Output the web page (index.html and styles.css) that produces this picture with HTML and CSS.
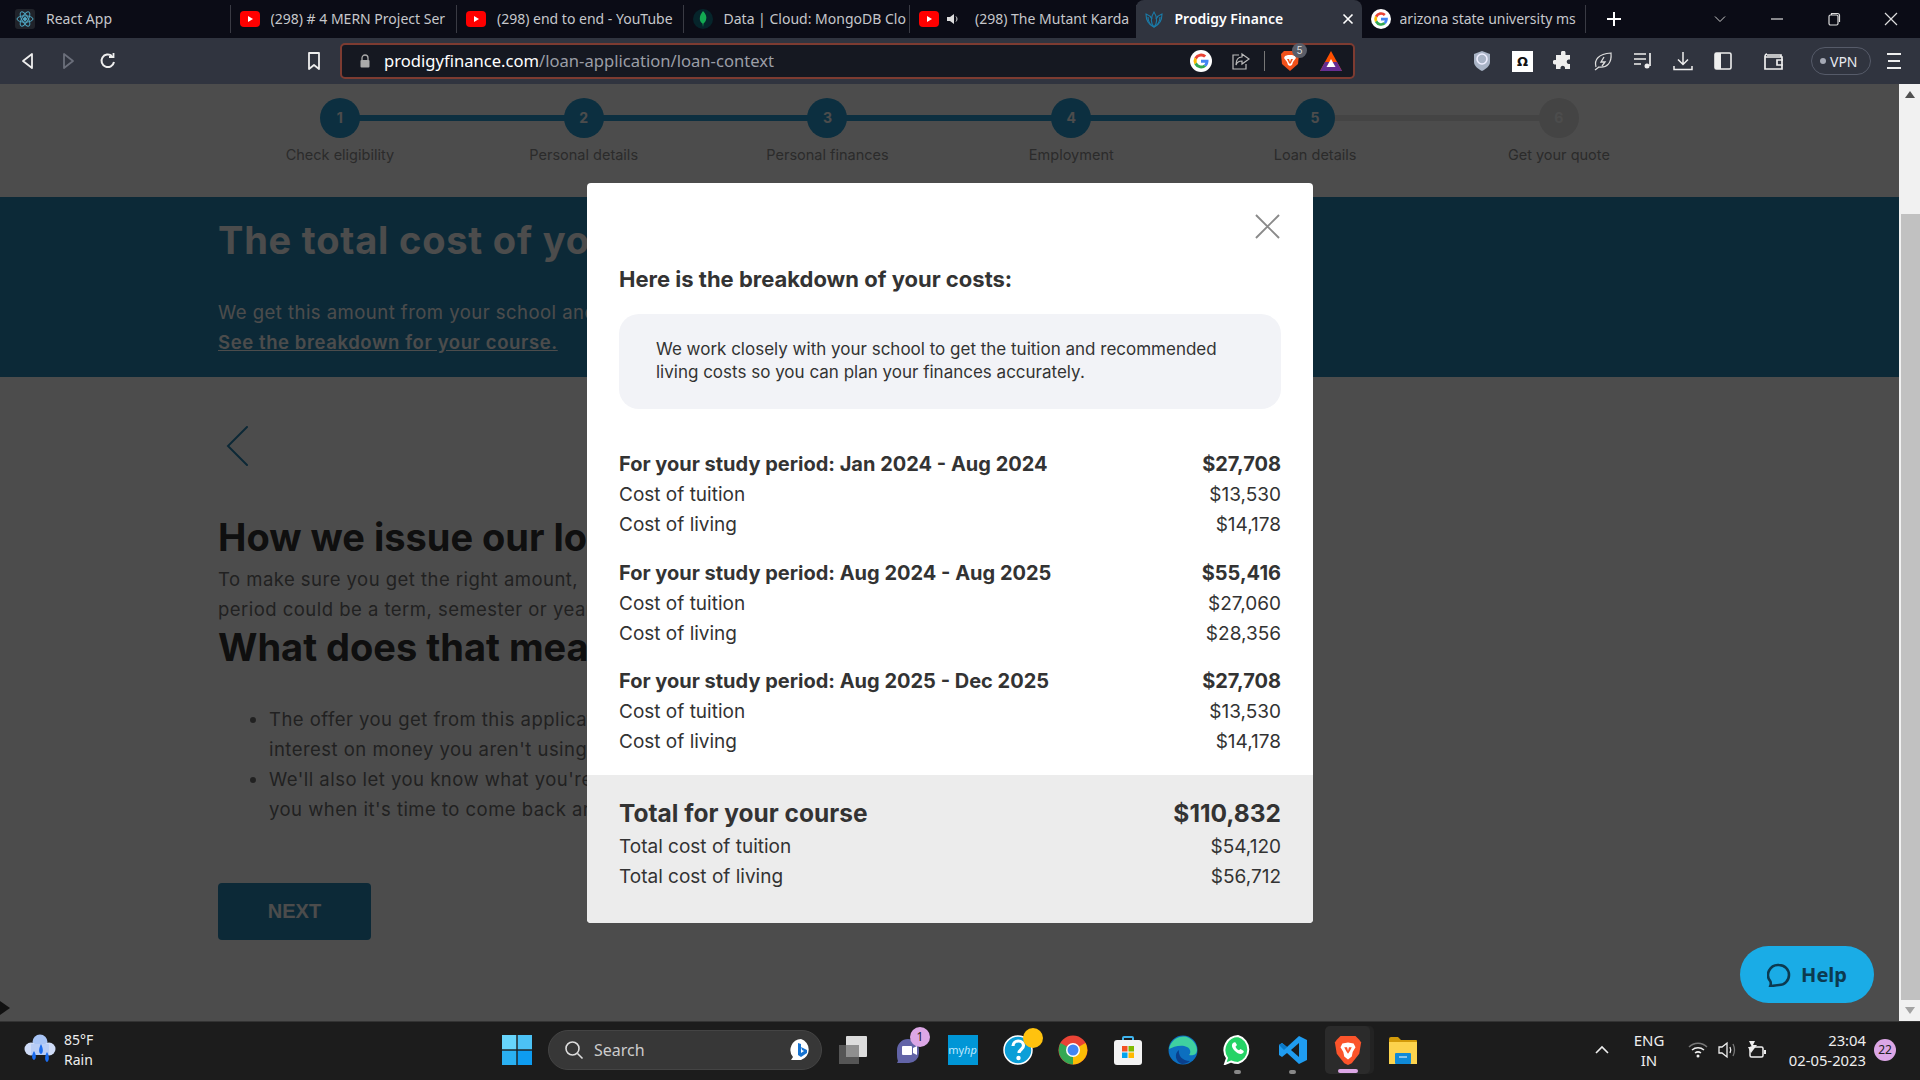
FILE: index.html
```html
<!DOCTYPE html>
<html lang="en">
  <head>
    <meta charset="UTF-8" />
    <meta name="viewport" content="width=device-width, initial-scale=1.0" />
    <title>Prodigy Finance</title>
    <link rel="stylesheet" href="styles.css">
  </head>
  <body>
    <svg class="defs" width="0" height="0">
      <symbol id="yt" viewBox="0 0 20 20"><rect x="0" y="2" width="20" height="16" rx="4" fill="#f00"/><path d="M8 7l5 3-5 3z" fill="#fff"/></symbol>
      <symbol id="google" viewBox="0 0 24 24">
        <circle cx="12" cy="12" r="12" fill="#fff"/>
        <path d="M12 7a5 5 0 0 1 3.4 1.3l2.3-2.3A8.4 8.4 0 0 0 4.8 8.2l2.7 2.1A5 5 0 0 1 12 7z" fill="#ea4335"/>
        <path d="M7.500 10.300l-2.700-2.100a8.400 8.400 0 0 0 0 7.600l2.700-2.100a5 5 0 0 1 0-3.400z" fill="#fbbc05"/>
        <path d="M4.800 15.800A8.400 8.400 0 0 0 17.700 18l-2.600-2a5 5 0 0 1-7.600-2.300z" fill="#34a853"/>
        <path d="M20.200 10.500H12v3.300h4.700a4 4 0 0 1-1.600 2.200l2.600 2c1.700-1.500 2.700-4.400 2.500-7.500z" fill="#4285f4"/>
      </symbol>
    </svg>

    <div class="tabbar">
      <div class="tab tab-first">
        <svg class="fav" viewBox="0 0 20 20" fill="none" stroke="#4fa8c4" stroke-width="1"><rect width="20" height="20" rx="3" fill="#20232a" stroke="none"/><ellipse cx="10" cy="10" rx="8" ry="3.200"/><ellipse cx="10" cy="10" rx="8" ry="3.200" transform="rotate(60 10 10)"/><ellipse cx="10" cy="10" rx="8" ry="3.200" transform="rotate(120 10 10)"/><circle cx="10" cy="10" r="1.500" fill="#4fa8c4"/></svg>
        <span class="tab-title">React App</span>
      </div>
      <div class="tab"><svg class="fav"><use href="#yt"/></svg><span class="tab-title">(298) # 4 MERN Project Ser</span></div>
      <div class="tab"><svg class="fav"><use href="#yt"/></svg><span class="tab-title">(298) end to end - YouTube</span></div>
      <div class="tab">
        <svg class="fav" viewBox="0 0 20 20"><circle cx="10" cy="10" r="10" fill="#06252b"/><path d="M10 2c3 3 4 6 3 9-.5 2-2 3-2.500 3.500L10 18l-.5-3.500C8 13.500 7 12 6.800 10 6.700 7 8 4.500 10 2z" fill="#13aa52"/></svg>
        <span class="tab-title">Data | Cloud: MongoDB Clo</span>
      </div>
      <div class="tab">
        <svg class="fav"><use href="#yt"/></svg>
        <svg class="tab-sound" viewBox="0 0 14 14"><path d="M1 5h3l4-3v10L4 9H1z" fill="#ddd"/><path d="M10 4.500c1.300 1.500 1.300 3.500 0 5" stroke="#ddd" fill="none"/></svg>
        <span class="tab-title">(298) The Mutant Karda</span>
      </div>
      <div class="tab tab-active">
        <svg class="fav" viewBox="0 0 20 20" fill="none" stroke="#1a7ba8" stroke-width="1.100"><path d="M10 18C5 16 2 12 2 5c3 1 5 3 6 5"/><path d="M10 18c5-2 8-6 8-13-3 1-5 3-6 5"/><path d="M10 18c-3-3-4-9 0-15 4 6 3 12 0 15z"/><path d="M10 18c-4-2-6-6-6-10M10 18c4-2 6-6 6-10"/></svg>
        <span class="tab-title">Prodigy Finance</span>
        <svg class="tab-close" viewBox="0 0 12 12" stroke="#fff" stroke-width="1.600"><path d="M1.500 1.500l9 9M10.500 1.500l-9 9"/></svg>
      </div>
      <div class="tab tab-last"><svg class="fav"><use href="#google"/></svg><span class="tab-title">arizona state university ms</span></div>
      <svg class="new-tab" viewBox="0 0 16 16" stroke="#fff" stroke-width="2"><path d="M8 1v14M1 8h14"/></svg>
      <div class="win-controls">
        <svg class="win-icon" viewBox="0 0 14 14" fill="none" stroke="#ccc"><path d="M2 4.500l5 5 5-5"/></svg>
        <svg class="win-icon" viewBox="0 0 14 14" stroke="#ddd" stroke-width="1.200"><path d="M1 7h12"/></svg>
        <svg class="win-icon" viewBox="0 0 14 14" fill="none" stroke="#ddd" stroke-width="1.200"><rect x="2" y="3" width="9" height="10" rx="1.500"/><path d="M4.500 3V1.500h6a2 2 0 0 1 2 2V10"/></svg>
        <svg class="win-icon" viewBox="0 0 14 14" stroke="#ddd" stroke-width="1.200"><path d="M1 1l12 12M13 1L1 13"/></svg>
      </div>
    </div>

    <div class="toolbar">
      <svg class="tool nav-first" viewBox="0 0 20 20" fill="none" stroke="#eee" stroke-width="1.800"><path d="M14 3v14L5 10z" stroke-linejoin="round"/></svg>
      <svg class="tool" viewBox="0 0 20 20" fill="none" stroke="#6b6f7b" stroke-width="1.800"><path d="M6 3v14l9-7z" stroke-linejoin="round"/></svg>
      <svg class="tool" viewBox="0 0 20 20" fill="none" stroke="#eee" stroke-width="2"><path d="M16 11a6.300 6.300 0 1 1-2-6"/><path d="M11 6h4.500V2" stroke-width="1.800"/></svg>
      <svg class="tool bookmark" viewBox="0 0 20 20" fill="none" stroke="#eee" stroke-width="1.800"><path d="M5 2h10v16l-5-4-5 4z" stroke-linejoin="round"/></svg>
      <div class="urlbar">
        <svg class="lock" viewBox="0 0 12 14"><path d="M3 6V4a3 3 0 0 1 6 0v2" fill="none" stroke="#aaa" stroke-width="1.300"/><rect x="1.500" y="6" width="9" height="7.500" rx="1" fill="#aaa"/></svg>
        <span class="url"><span class="url-host">prodigyfinance.com</span>/loan-application/loan-context</span>
        <svg class="url-g"><use href="#google"/></svg>
        <svg class="url-share" viewBox="0 0 20 20" fill="none" stroke="#bbb" stroke-width="1.200"><path d="M8 4H2v14h13v-5"/><path d="M11 3l7 5-7 5v-3c-3 0-5 1-6 4 0-5 2-8 6-8z"/></svg>
        <span class="url-sep"></span>
        <span class="shield">
          <svg class="url-brave" viewBox="0 0 20 22"><path d="M4 1h12l3 3-1 10-8 7-8-7L1 4z" fill="#f1511b"/><path d="M5 6l3-1h4l3 1 1 2-3 4-1 3-2 1-2-1-1-3-3-4z" fill="#fff"/><path d="M7 9h2l1 3 1-3h2l-2 4-1 1-1-1z" fill="#f1511b"/></svg>
          <span class="shield-badge">5</span>
        </span>
        <svg class="url-bat" viewBox="0 0 24 22"><path d="M12 1l11 20H1z" fill="#ff5000"/><path d="M1 21l5-9h12l5 9z" fill="#662d91"/><path d="M12 9l4.500 8h-9z" fill="#fff"/></svg>
      </div>
      <svg class="ext ext-first" viewBox="0 0 20 22"><path d="M10 1l8 3v8c0 4-4 7-8 9-4-2-8-5-8-9V4z" fill="#a9b4c6"/><circle cx="10" cy="9" r="5" fill="none" stroke="#eef" stroke-width="1.600"/></svg>
      <span class="omega">Ω</span>
      <svg class="ext" viewBox="0 0 20 20"><path d="M8 1.500a2.300 2.300 0 0 1 4.500 0V4H17v4.500h-1.500a2.300 2.300 0 0 0 0 4.500H17v5h-5v-1.500a2.300 2.300 0 0 0-4.500 0V18H3v-4.500H1.500a2.300 2.300 0 0 1 0-4.500H3V4h5z" fill="#eee"/></svg>
      <svg class="ext" viewBox="0 0 20 20" fill="none" stroke="#ddd" stroke-width="1.200"><path d="M3 16C1 9 5 3 18 2c1 10-4 15-12 14l-4 3"/><path d="M11 6l-3 5h4l-3 4" stroke-width="1.300"/></svg>
      <svg class="ext" viewBox="0 0 20 20" fill="none" stroke="#eee" stroke-width="1.700"><path d="M1 3h12M1 8h12M1 13h7"/><path d="M17 2v13"/><circle cx="14" cy="15" r="2.500" fill="#eee" stroke="none"/></svg>
      <svg class="ext" viewBox="0 0 20 20" fill="none" stroke="#eee" stroke-width="1.500"><path d="M10 1v12M5 8.500l5 5 5-5M1 15v3.500h18V15"/></svg>
      <svg class="ext" viewBox="0 0 20 20"><rect x="2" y="2" width="16" height="16" rx="1.500" fill="none" stroke="#eee" stroke-width="1.600"/><rect x="2" y="2" width="6" height="16" fill="#eee"/></svg>
      <svg class="ext ext-wallet" viewBox="0 0 22 20" fill="none" stroke="#eee" stroke-width="1.700"><path d="M4 4h14v2M2 6h17v12H2zM2 6c0-2 1-3 2-3"/><path d="M20 9h-6v5h6"/></svg>
      <span class="vpn"><span class="vpn-dot"></span>VPN</span>
      <svg class="ext ext-menu" viewBox="0 0 20 20" stroke="#eee" stroke-width="1.800"><path d="M3 3h14M4 10h12M3 17h14"/></svg>
    </div>

    <div class="viewport">
      <main class="page">
        <div class="stepper">
          <div class="step step-done"><span class="step-dot">1</span><span class="step-label">Check eligibility</span></div>
          <div class="step step-done"><span class="step-dot">2</span><span class="step-label">Personal details</span></div>
          <div class="step step-done"><span class="step-dot">3</span><span class="step-label">Personal finances</span></div>
          <div class="step step-done"><span class="step-dot">4</span><span class="step-label">Employment</span></div>
          <div class="step step-current"><span class="step-dot">5</span><span class="step-label">Loan details</span></div>
          <div class="step step-todo"><span class="step-dot">6</span><span class="step-label">Get your quote</span></div>
        </div>

        <section class="banner">
          <h1>The total cost of your</h1>
          <p>We get this amount from your school and</p>
          <a class="banner-link" href="#">See the breakdown for your course.</a>
        </section>

        <section class="content">
          <svg class="back" viewBox="0 0 22 40" fill="none" stroke="#2a86b5" stroke-width="2" stroke-linecap="round"><path d="M21 1L2 20l19 19"/></svg>
          <h2>How we issue our loan</h2>
          <p>To make sure you get the right amount,<br />period could be a term, semester or year</p>
          <h2>What does that mean</h2>
          <ul>
            <li>The offer you get from this application<br />interest on money you aren't using</li>
            <li>We'll also let you know what you're<br />you when it's time to come back and</li>
          </ul>
          <button class="next-btn">NEXT</button>
        </section>
      </main>

      <div class="overlay"></div>
      <span class="corner-arrow"></span>

      <div class="modal">
        <div class="modal-head">
          <svg class="modal-close" viewBox="0 0 26 26" stroke="#8a8a8a" stroke-width="2"><path d="M1 1l24 24M25 1L1 25"/></svg>
        </div>
        <div class="modal-body">
          <h3>Here is the breakdown of your costs:</h3>
          <p class="note">We work closely with your school to get the tuition and recommended living costs so you can plan your finances accurately.</p>
          <div class="group">
            <div class="row row-head"><span>For your study period: Jan 2024 - Aug 2024</span><span>$27,708</span></div>
            <div class="row"><span>Cost of tuition</span><span>$13,530</span></div>
            <div class="row"><span>Cost of living</span><span>$14,178</span></div>
          </div>
          <div class="group">
            <div class="row row-head"><span>For your study period: Aug 2024 - Aug 2025</span><span>$55,416</span></div>
            <div class="row"><span>Cost of tuition</span><span>$27,060</span></div>
            <div class="row"><span>Cost of living</span><span>$28,356</span></div>
          </div>
          <div class="group">
            <div class="row row-head"><span>For your study period: Aug 2025 - Dec 2025</span><span>$27,708</span></div>
            <div class="row"><span>Cost of tuition</span><span>$13,530</span></div>
            <div class="row"><span>Cost of living</span><span>$14,178</span></div>
          </div>
        </div>
        <div class="modal-total">
          <div class="row row-total"><span>Total for your course</span><span>$110,832</span></div>
          <div class="row"><span>Total cost of tuition</span><span>$54,120</span></div>
          <div class="row"><span>Total cost of living</span><span>$56,712</span></div>
        </div>
      </div>

      <button class="help-btn">
        <svg class="help-icon" viewBox="0 0 24 24" fill="none" stroke="#0c3a50" stroke-width="2.600"><path d="M12 2a10 10 0 0 1 0 20c-2 0-5 .5-9 1.500 1-1.500 1-3 .5-5A10 10 0 0 1 12 2z" stroke-linejoin="round"/></svg>
        Help
      </button>

      <div class="scrollbar">
        <span class="scroll-up"></span>
        <span class="scroll-thumb"></span>
        <span class="scroll-down"></span>
      </div>
    </div>

    <div class="taskbar">
      <div class="weather">
        <svg class="weather-icon" viewBox="0 0 32 32"><circle cx="16" cy="8" r="7.500" fill="#a8c4f5"/><circle cx="7" cy="15" r="6.500" fill="#cfdcf7"/><circle cx="25" cy="15" r="6.500" fill="#cfdcf7"/><rect x="7" y="10" width="18" height="11" fill="#b8cdf6"/><path d="M10 17c2.500 4 2.500 8 0 9-2.500-1-2.500-5 0-9zM17 10c2.500 5 2.500 9 0 10-2.500-1-2.500-5 0-10zM23 18c2.500 4 2.500 9 0 10-2.500-1-2.500-6 0-10z" fill="#1a6cf0"/></svg>
        <div class="weather-text"><span>85°F</span><span>Rain</span></div>
      </div>

      <div class="task-center">
        <svg class="start" viewBox="0 0 30 30"><rect width="14.300" height="14.300" fill="#67d5fb"/><rect x="15.700" width="14.300" height="14.300" fill="#4cc2f5"/><rect y="15.700" width="14.300" height="14.300" fill="#2ab0f2"/><rect x="15.700" y="15.700" width="14.300" height="14.300" fill="#0e9cf0"/></svg>
        <div class="search">
          <svg class="search-icon" viewBox="0 0 20 20" fill="none" stroke="#ddd" stroke-width="1.600"><circle cx="8.500" cy="8.500" r="6.500"/><path d="M13.500 13.500l5 5"/></svg>
          <span class="search-text">Search</span>
          <svg class="bing" viewBox="0 0 24 24"><path d="M12 1a11 11 0 0 1 0 21H2l2-3A11 11 0 0 1 12 1z" fill="#fff"/><path d="M9 5l3 1v9l3-2-2-1-1-3 6 3v3l-6 4-3-2z" fill="#1673d1"/></svg>
        </div>
        <span class="app">
          <svg class="app-icon" viewBox="0 0 30 30"><rect x="1" y="10" width="20" height="19" fill="#555"/><rect x="8" y="1" width="21" height="21" rx="1" fill="#dcdcdc"/><rect x="8" y="10" width="13" height="12" fill="#8f8f8f"/></svg>
        </span>
        <span class="app">
          <svg class="app-icon" viewBox="0 0 30 30"><path d="M15 4a11 11 0 0 1 11 11v3a10 10 0 0 1-10 10H4l1-2c-1-2-1-5-1-8V15A11 11 0 0 1 15 4z" fill="#6264a7"/><rect x="9" y="11" width="10" height="9" rx="1" fill="#fff"/><path d="M20 13l4-2v9l-4-2z" fill="#fff"/></svg>
          <span class="app-badge">1</span>
        </span>
        <span class="app">
          <span class="myhp">my<i>hp</i></span>
        </span>
        <span class="app">
          <svg class="app-icon" viewBox="0 0 30 30"><circle cx="15" cy="15" r="14" fill="#0b9fd8" stroke="#fff" stroke-width="1.500"/><path d="M10 11c0-3 2.500-5 5.500-5s5 2 5 4.500c0 4-4.500 4-4.500 7.500" fill="none" stroke="#fff" stroke-width="3.200"/><circle cx="15.500" cy="23" r="2.200" fill="#fff"/></svg>
          <span class="app-dot-yellow"></span>
        </span>
        <span class="app">
          <svg class="app-icon" viewBox="0 0 30 30"><circle cx="15" cy="15" r="14.500" fill="#ea4335"/><path d="M15 15L27.500 8A14.500 14.500 0 0 1 15 29.500z" fill="#fbbc05"/><path d="M15 15L15 29.500A14.500 14.500 0 0 1 2.500 8z" fill="#34a853"/><circle cx="15" cy="15" r="7" fill="#fff"/><circle cx="15" cy="15" r="5.500" fill="#4285f4"/></svg>
        </span>
        <span class="app">
          <svg class="app-icon" viewBox="0 0 30 30"><path d="M10 6V3a1 1 0 0 1 1-1h8a1 1 0 0 1 1 1v3" fill="none" stroke="#3fb4ee" stroke-width="2"/><rect x="1" y="5" width="28" height="25" rx="3" fill="#f3f3f3"/><rect x="9" y="11" width="5.500" height="5.500" fill="#f25022"/><rect x="15.500" y="11" width="5.500" height="5.500" fill="#7fba00"/><rect x="9" y="17.500" width="5.500" height="5.500" fill="#00a4ef"/><rect x="15.500" y="17.500" width="5.500" height="5.500" fill="#ffb900"/></svg>
        </span>
        <span class="app">
          <svg class="app-icon" viewBox="0 0 30 30"><circle cx="15" cy="15" r="14.500" fill="#0c6fc0"/><path d="M1 14C3 4 12 0 19 2c6 2 10 8 10 13 0 5-5 6-8 5 2-2 2-6-2-8-6-3-14 0-18 2z" fill="#3fd0a0"/><path d="M14 29C7 27 6 18 11 15c-1 5 3 11 11 11-2 2-5 3-8 3z" fill="#0a3f8c"/></svg>
        </span>
        <span class="app app-running">
          <svg class="app-icon" viewBox="0 0 30 30"><path d="M15 1a14 14 0 0 1 0 27c-2 0-5-.5-7-1.500L2 29l2-6A14 14 0 0 1 15 1z" fill="#25d366" stroke="#fff" stroke-width="2"/><path d="M10 8c-2 2-1 5 2 8s6 4 8 2c1-1 1-2 0-2.500l-2.500-1.500-1.500 1.200c-1.500-.5-3-2-3.500-3.500L14 10l-1.500-2.500C12 7 11 7 10 8z" fill="#fff"/></svg>
        </span>
        <span class="app app-running">
          <svg class="app-icon" viewBox="0 0 30 30"><path d="M21 1l8 4v20l-8 4L9 18l-5 4-3-2V10l3-2 5 4z" fill="#1f9cf0"/><path d="M21 8l-8 7 8 7z" fill="#1c1c1c"/><path d="M21 1L9 12 4 8l-3 2 5 5 15-14z" fill="#0a78c7"/></svg>
        </span>
        <span class="app app-active">
          <svg class="app-icon" viewBox="0 0 30 32"><path d="M7 1h16l4 4 2 3-2 12-8 10-4 2-4-2-8-10L1 8l2-3z" fill="#fb542b"/><path d="M9 9l6-1 6 1 2 4-3 5-1 5-4 3-4-3-1-5-3-5z" fill="#fff"/><path d="M11 13h3l1 4 1-4h3l-2 4-2 3-2-3z" fill="#fb542b"/></svg>
        </span>
        <span class="app">
          <svg class="app-icon" viewBox="0 0 30 28"><path d="M1 3a2 2 0 0 1 2-2h7l3 3h15a1 1 0 0 1 1 1v4H1z" fill="#d39b0a"/><rect x="1" y="6" width="28" height="22" fill="#fcd34d"/><rect x="7" y="17" width="16" height="11" rx="1" fill="#0f8ad8"/><path d="M11 21h8" stroke="#fff"/></svg>
        </span>
      </div>

      <div class="tray">
        <svg class="tray-chevron" viewBox="0 0 14 10" fill="none" stroke="#eee" stroke-width="1.600"><path d="M1 8l6-6 6 6"/></svg>
        <div class="tray-lang"><span>ENG</span><span>IN</span></div>
        <svg class="tray-icon tray-wifi" viewBox="0 0 20 20" fill="none" stroke="#eee" stroke-width="1.500"><path d="M1 7c5-5 13-5 18 0" stroke="#777"/><path d="M4 10c3.500-3 8.500-3 12 0M7 13c2-1.500 4-1.500 6 0"/><circle cx="10" cy="16" r="1.500" fill="#eee" stroke="none"/></svg>
        <svg class="tray-icon" viewBox="0 0 20 20" fill="none" stroke="#eee" stroke-width="1.300"><path d="M2 7h3l5-4v14l-5-4H2z"/><path d="M13 7c1 2 1 4 0 6"/><path d="M16 4c2 4 2 8 0 12" stroke="#777"/></svg>
        <svg class="tray-icon tray-battery" viewBox="0 0 24 20" fill="#eee"><path d="M6 1l3 6H5l3 6 6-8h-4l2-4z"/><rect x="7" y="7" width="13" height="10" rx="1.500" fill="none" stroke="#eee" stroke-width="1.500"/><rect x="21" y="10" width="2" height="4"/></svg>
        <div class="tray-clock"><span>23:04</span><span>02-05-2023</span></div>
        <span class="tray-badge">22</span>
      </div>
    </div>
  </body>
</html>
```

FILE: styles.css
```css
* {
  box-sizing: border-box;
}

html,
body {
  height: 100%;
}

body {
  margin: 0;
  display: flex;
  flex-direction: column;
  height: 1080px;
  overflow: hidden;
  font-family: Inter, "Liberation Sans", sans-serif;
  background-color: #fff;
}

.defs {
  position: absolute;
}

/* browser tabs */
.tabbar {
  display: flex;
  align-items: center;
  height: 38px;
  padding-left: 4px;
  background-color: #0b0c16;
}

.tab {
  display: flex;
  align-items: center;
  width: 226.5px;
  height: 28px;
  padding-left: 9px;
  border-right: 1px solid #3a3b44;
  color: #c6c7cb;
  font-family: "Noto Sans", sans-serif;
  font-size: 14px;
}

.tab-first {
  padding-left: 11px;
}

.tab-active {
  width: 226px;
  height: 38px;
  padding-left: 8px;
  padding-right: 8px;
  margin-left: -1px;
  border-right: none;
  border-radius: 8px 8px 0 0;
  background-color: #30343f;
  color: #fff;
  font-weight: 600;
}

.tab-last {
  width: 224px;
  border-right: 1px solid #3a3b44;
}

.tab-last .fav {
  margin-right: 9px;
}

.fav {
  flex: none;
  width: 20px;
  height: 20px;
  margin-right: 11px;
}

.tab-sound {
  flex: none;
  width: 14px;
  height: 14px;
  margin: 0 15px 0 -4px;
}

.tab-title {
  flex: 1;
  overflow: hidden;
  margin-top: -2px;
  white-space: nowrap;
}

.tab-close {
  flex: none;
  width: 12px;
  height: 12px;
}

.new-tab {
  width: 16px;
  height: 16px;
  margin-left: 20px;
}

.win-controls {
  display: flex;
  align-items: center;
  margin-left: auto;
}

.win-icon {
  width: 14px;
  height: 14px;
  margin-right: 43px;
}

.win-icon:last-child {
  margin-right: 22px;
}

/* browser toolbar */
.toolbar {
  display: flex;
  align-items: center;
  height: 46px;
  background-color: #30343f;
}

.tool {
  flex: none;
  width: 20px;
  height: 20px;
  margin-right: 20px;
}

.nav-first {
  margin-left: 18px;
}

.bookmark {
  margin: 0 16px 0 166px;
}

.urlbar {
  display: flex;
  align-items: center;
  flex: none;
  width: 1015px;
  height: 36px;
  padding-left: 17px;
  border: 2px solid #7d3b31;
  border-radius: 5px;
  background-color: #151821;
}

.lock {
  width: 12px;
  height: 14px;
  margin-right: 13px;
}

.url {
  flex: 1;
  margin-top: -2px;
  color: #9b9ea6;
  font-family: "Noto Sans", sans-serif;
  font-size: 16.6px;
}

.url-host {
  color: #fff;
}

.url-g {
  width: 22px;
  height: 22px;
  margin-right: 19px;
}

.url-share {
  width: 20px;
  height: 20px;
  margin-right: 13px;
}

.url-sep {
  width: 1px;
  height: 20px;
  margin-right: 15px;
  background-color: #777;
}

.shield {
  position: relative;
  display: flex;
  margin-right: 19px;
}

.url-brave {
  width: 20px;
  height: 22px;
}

.shield-badge {
  position: absolute;
  top: -7px;
  left: 12px;
  width: 15px;
  height: 15px;
  border-radius: 50%;
  background-color: #5a5d68;
  color: #ddd;
  font-size: 10px;
  line-height: 15px;
  text-align: center;
}

.url-bat {
  width: 24px;
  height: 22px;
  margin-right: 10px;
}

.ext {
  flex: none;
  width: 20px;
  height: 20px;
  margin-left: 20px;
}

.ext-first {
  margin-left: 117px;
  height: 22px;
}

.omega {
  flex: none;
  width: 21px;
  height: 21px;
  margin-left: 20px;
  background-color: #fff;
  color: #111;
  font-family: "DejaVu Sans", sans-serif;
  font-size: 13px;
  font-weight: bold;
  line-height: 21px;
  text-align: center;
}

.ext-wallet {
  margin-left: 30px;
  width: 22px;
}

.vpn {
  display: flex;
  align-items: center;
  flex: none;
  width: 60px;
  height: 28px;
  margin-left: 26px;
  padding-left: 8px;
  border: 1.5px solid #565b69;
  border-radius: 14px;
  color: #e8eaf0;
  font-family: "Noto Sans", sans-serif;
  font-size: 14px;
}

.vpn-dot {
  width: 6px;
  height: 6px;
  margin-right: 4px;
  border-radius: 50%;
  background-color: #a5a9b5;
}

.ext-menu {
  margin-left: 13px;
}

/* page area */
.viewport {
  position: relative;
  display: flex;
  flex: 1;
  min-height: 0;
  background-color: #4d4d4d;
}

.page {
  flex: 1;
  overflow: hidden;
  isolation: isolate;
  background-color: #fff;
}

.stepper {
  display: flex;
  height: 113px;
  padding: 14px 0 0 218px;
}

.step {
  position: relative;
  display: flex;
  flex-direction: column;
  align-items: center;
  width: 243.8px;
}

.step::after {
  content: "";
  position: absolute;
  top: 17px;
  left: 50%;
  width: 100%;
  height: 6px;
  background-color: #289ed5;
}

.step-current::after {
  background-color: #e3e3e3;
}

.step-todo::after {
  display: none;
}

.step-dot {
  position: relative;
  z-index: 1;
  width: 40px;
  height: 40px;
  border-radius: 50%;
  background-color: #289ed5;
  color: #fff;
  font-size: 14px;
  font-weight: 700;
  line-height: 40px;
  text-align: center;
}

.step-todo .step-dot {
  background-color: #e3e3e3;
  color: #fff;
}

.step-label {
  margin-top: 7px;
  color: #909090;
  font-size: 14.5px;
  line-height: 20px;
}

.banner {
  height: 180px;
  padding: 20px 0 0 218px;
  background-color: #2889b8;
  color: #fff;
}

.banner h1 {
  margin: 0 0 34px;
  font-size: 38px;
  font-weight: 700;
  letter-spacing: 0.8px;
  line-height: 46px;
}

.banner p {
  margin: 0;
  font-size: 18.5px;
  letter-spacing: 0.47px;
  line-height: 30px;
}

.banner-link {
  display: block;
  color: #fff;
  font-size: 18.5px;
  font-weight: 600;
  letter-spacing: 0.6px;
  line-height: 31px;
}

.content {
  padding: 49px 0 0 218px;
}

.back {
  display: block;
  width: 22px;
  height: 40px;
  margin: 0 0 48px 8px;
}

.content h2 {
  margin: 0 0 4px;
  color: #333;
  font-size: 38px;
  font-weight: 700;
  line-height: 46px;
}

.content p {
  margin: 0;
  color: #707070;
  font-size: 18.5px;
  letter-spacing: 0.47px;
  line-height: 30px;
}

.content ul {
  margin: 34px 0 59px;
  padding-left: 51px;
  color: #707070;
  font-size: 18.5px;
  letter-spacing: 0.47px;
  line-height: 30px;
}

.next-btn {
  display: block;
  width: 153px;
  height: 57px;
  border: none;
  border-radius: 4px;
  background-color: #2889b8;
  color: #fff;
  font-family: "Liberation Sans", sans-serif;
  font-size: 20px;
  font-weight: 700;
}

.overlay {
  position: absolute;
  top: 0;
  bottom: 0;
  left: 0;
  right: 21px;
  background-color: rgba(0, 0, 0, 0.7);
}

.corner-arrow {
  position: absolute;
  left: 0;
  bottom: 6px;
  border-left: 10px solid #111;
  border-top: 7px solid transparent;
  border-bottom: 7px solid transparent;
}

/* costs dialog */
.modal {
  position: absolute;
  top: 99px;
  left: 587px;
  width: 726px;
  height: 740px;
  overflow: hidden;
  border-radius: 4px;
  background-color: #fff;
  color: #333;
}

.modal-head {
  display: flex;
  justify-content: flex-end;
  height: 56px;
  padding: 31px 33px 0 0;
}

.modal-close {
  width: 25px;
  height: 25px;
}

.modal-body {
  padding: 25px 32px 0;
}

.modal-body h3 {
  margin: 0 0 20px;
  font-size: 22px;
  font-weight: 700;
  line-height: 30px;
}

.note {
  height: 95px;
  margin: 0 0 40px;
  padding: 24px 37px;
  border-radius: 20px;
  background-color: #f2f3f7;
  font-size: 17px;
  line-height: 23px;
}

.group {
  margin-bottom: 18.5px;
}

.row {
  display: flex;
  justify-content: space-between;
  font-size: 19px;
  line-height: 30px;
}

.group .row {
  padding-top: 1px;
  line-height: 29px;
}

.group .row-head {
  padding-top: 0;
  font-size: 20px;
  font-weight: 700;
  line-height: 30px;
}

.modal-total {
  height: 149.5px;
  padding: 20px 32px 0;
  background-color: #ececec;
}

.row-total {
  margin-bottom: 1px;
  font-size: 24.5px;
  font-weight: 700;
  line-height: 36px;
}

.help-btn {
  position: absolute;
  top: 862px;
  left: 1740px;
  display: flex;
  align-items: center;
  justify-content: center;
  width: 134px;
  height: 57px;
  border: none;
  border-radius: 29px;
  background-color: #1aace6;
  color: #0c3a50;
  font-family: "Noto Sans", sans-serif;
  font-size: 20px;
  font-weight: 700;
}

.help-icon {
  width: 24px;
  height: 24px;
  margin-right: 10px;
}

.scrollbar {
  display: flex;
  flex: none;
  flex-direction: column;
  align-items: flex-end;
  width: 21px;
  padding-bottom: 0;
  background-color: #f1f1f1;
}

.scroll-up,
.scroll-down {
  align-self: center;
  margin-top: 7px;
  border-left: 5px solid transparent;
  border-right: 5px solid transparent;
  border-bottom: 7px solid #505050;
}

.scroll-thumb {
  width: 19px;
  height: 786px;
  margin-top: 116px;
  background-color: #c1c1c1;
}

.scroll-down {
  margin-top: 7px;
  border-bottom: none;
  border-top: 7px solid #a3a3a3;
}

/* windows taskbar */
.taskbar {
  position: relative;
  display: flex;
  align-items: center;
  flex: none;
  height: 59px;
  padding-bottom: 2px;
  border-top: 1px solid #333;
  background-color: #1c1c1c;
  color: #eee;
  font-family: "Noto Sans", sans-serif;
  font-size: 14px;
}

.weather {
  display: flex;
  align-items: center;
  width: 502px;
  padding-left: 24px;
}

.weather-icon {
  width: 32px;
  height: 32px;
  margin-right: 8px;
}

.weather-text {
  display: flex;
  flex-direction: column;
  line-height: 20px;
}

.task-center {
  display: flex;
  align-items: center;
}

.start {
  width: 30px;
  height: 30px;
}

.search {
  display: flex;
  align-items: center;
  width: 274px;
  height: 40px;
  margin: 0 3px 0 16px;
  padding: 0 8px 0 15px;
  border: 1px solid #444;
  border-radius: 20px;
  background-color: #373737;
}

.search-icon {
  width: 20px;
  height: 20px;
}

.search-text {
  flex: 1;
  margin-left: 10px;
  color: #ccc;
  font-size: 16px;
}

.bing {
  width: 24px;
  height: 24px;
}

.app {
  position: relative;
  display: flex;
  align-items: center;
  justify-content: center;
  width: 55px;
  height: 48px;
}

.app-icon {
  width: 30px;
  height: 30px;
}

.app-badge {
  position: absolute;
  top: 1px;
  right: 5px;
  width: 20px;
  height: 20px;
  border-radius: 50%;
  background-color: #dca7e6;
  color: #222;
  font-size: 12px;
  line-height: 20px;
  text-align: center;
}

.app-dot-yellow {
  position: absolute;
  top: 2px;
  right: 2px;
  width: 20px;
  height: 20px;
  border-radius: 50%;
  background-color: #ffc20e;
}

.myhp {
  width: 30px;
  height: 30px;
  background-color: #0096d6;
  color: #bfe9ff;
  font-size: 11px;
  line-height: 30px;
  text-align: center;
}

.app-running::after {
  content: "";
  position: absolute;
  bottom: 0;
  width: 7px;
  height: 4px;
  border-radius: 2px;
  background-color: #888;
}

.app-active {
  width: 45px;
  margin: 0 5px;
  border-radius: 5px;
  background-color: #2b2b2b;
  box-shadow: 4px 0 0 #232323;
}

.app-active::after {
  content: "";
  position: absolute;
  bottom: 1px;
  width: 20px;
  height: 4px;
  border-radius: 2px;
  background-color: #dca7e6;
}

.tray {
  display: flex;
  align-items: center;
  margin-left: auto;
  padding-right: 54px;
}

.tray-chevron {
  width: 14px;
  height: 10px;
  margin-right: 24px;
}

.tray-lang {
  display: flex;
  flex-direction: column;
  align-items: center;
  width: 32px;
  margin-right: 23px;
  font-size: 15px;
  line-height: 20px;
}

.tray-icon {
  width: 20px;
  height: 20px;
  margin-right: 3px;
}

.tray-wifi {
  margin-right: 9px;
}

.tray-battery {
  width: 24px;
  margin: 0 0 0 3px;
}

.tray-clock {
  display: flex;
  flex-direction: column;
  align-items: flex-end;
  width: 86px;
  margin-left: 13px;
  font-size: 14.8px;
  line-height: 20px;
}

.tray-badge {
  position: absolute;
  right: 24px;
  width: 22px;
  height: 22px;
  border-radius: 50%;
  background-color: #dca7e6;
  color: #222;
  font-size: 12px;
  line-height: 22px;
  text-align: center;
}
```
